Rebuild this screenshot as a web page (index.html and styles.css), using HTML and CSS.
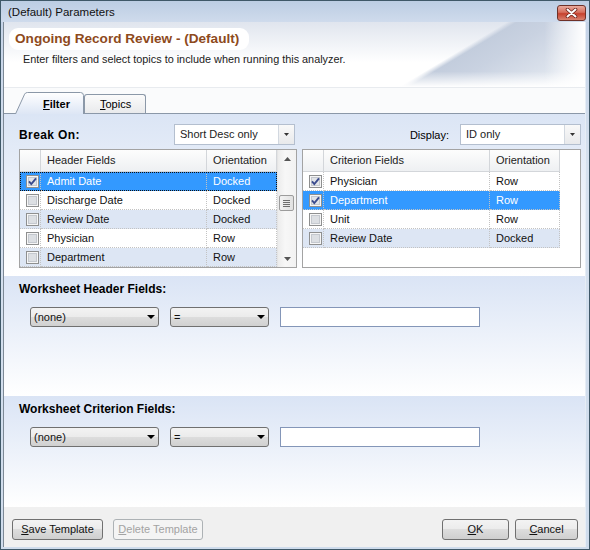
FILE: index.html
```html
<!DOCTYPE html>
<html>
<head>
<meta charset="utf-8">
<title>(Default) Parameters</title>
<link rel="stylesheet" href="styles.css">
</head>
<body>
<div class="window">
  <div class="titlebar">
    <span class="wtitle">(Default) Parameters</span>
    <span class="closebtn">
      <svg width="13" height="10" viewBox="0 0 13 10"><path d="M2.5 1.5 L10.5 8.5 M10.5 1.5 L2.5 8.5" stroke="#6b2219" stroke-width="3.6" stroke-linecap="round"/><path d="M2.5 1.5 L10.5 8.5 M10.5 1.5 L2.5 8.5" stroke="#ffffff" stroke-width="2" stroke-linecap="round"/></svg>
    </span>
  </div>
  <div class="client">
    <div class="banner">
      <div class="pill">Ongoing Record Review - (Default)</div>
      <div class="subtitle">Enter filters and select topics to include when running this analyzer.</div>
    </div>
    <div class="tabstrip">
      <div class="tab tab-on">
        <svg class="tabshape" width="69" height="22" viewBox="0 0 69 22">
          <defs><linearGradient id="tabfill" x1="0" y1="0" x2="0" y2="1"><stop offset="0" stop-color="#ffffff"/><stop offset="1" stop-color="#dde6f5"/></linearGradient></defs>
          <path d="M0.5 22 L9.6 2.2 Q10.4 0.5 12.4 0.5 L65.5 0.5 Q68.5 0.5 68.5 3.5 L68.5 22" fill="url(#tabfill)" stroke="#8b98a8"/>
        </svg>
        <span class="tablabel"><u>F</u>ilter</span>
      </div>
      <div class="tab tab-off"><u>T</u>opics</div>
    </div>
    <div class="page">
      <div class="section section-top">
        <div class="half">
          <div class="fieldrow">
            <span class="blabel">Break On:</span>
            <div class="combo combo-left">
              <span class="combo-text">Short Desc only</span>
              <span class="combo-btn"><svg width="5" height="3" viewBox="0 0 5 3"><path d="M0 0 H5 L2.5 3 Z" fill="#333"/></svg></span>
            </div>
          </div>
          <div class="grid">
            <div class="gtable">
              <div class="grow ghead"><div class="gc"></div><div class="gc">Header Fields</div><div class="gc">Orientation</div></div>
              <div class="grow sel focus">
                <div class="gc cbcell"><svg class="cb" width="13" height="13" viewBox="0 0 13 13"><rect x="0.5" y="0.5" width="12" height="12" fill="#f6f6f6" stroke="#8e8f8f"/><rect x="2.5" y="2.5" width="8" height="8" fill="#e2e4e8" stroke="#c4c8ce"/><path d="M3 6.3 L5.3 9 L10 3.4" fill="none" stroke="#3a4b8e" stroke-width="1.9"/></svg></div>
                <div class="gc">Admit Date</div><div class="gc">Docked</div>
              </div>
              <div class="grow">
                <div class="gc cbcell"><svg class="cb" width="13" height="13" viewBox="0 0 13 13"><rect x="0.5" y="0.5" width="12" height="12" fill="#f6f6f6" stroke="#8e8f8f"/><rect x="2.5" y="2.5" width="8" height="8" fill="#dcdfe3" stroke="#c4c8ce"/></svg></div>
                <div class="gc">Discharge Date</div><div class="gc">Docked</div>
              </div>
              <div class="grow alt">
                <div class="gc cbcell"><svg class="cb" width="13" height="13" viewBox="0 0 13 13"><rect x="0.5" y="0.5" width="12" height="12" fill="#f6f6f6" stroke="#8e8f8f"/><rect x="2.5" y="2.5" width="8" height="8" fill="#dcdfe3" stroke="#c4c8ce"/></svg></div>
                <div class="gc">Review Date</div><div class="gc">Docked</div>
              </div>
              <div class="grow">
                <div class="gc cbcell"><svg class="cb" width="13" height="13" viewBox="0 0 13 13"><rect x="0.5" y="0.5" width="12" height="12" fill="#f6f6f6" stroke="#8e8f8f"/><rect x="2.5" y="2.5" width="8" height="8" fill="#dcdfe3" stroke="#c4c8ce"/></svg></div>
                <div class="gc">Physician</div><div class="gc">Row</div>
              </div>
              <div class="grow alt">
                <div class="gc cbcell"><svg class="cb" width="13" height="13" viewBox="0 0 13 13"><rect x="0.5" y="0.5" width="12" height="12" fill="#f6f6f6" stroke="#8e8f8f"/><rect x="2.5" y="2.5" width="8" height="8" fill="#dcdfe3" stroke="#c4c8ce"/></svg></div>
                <div class="gc">Department</div><div class="gc">Row</div>
              </div>
            </div>
            <div class="vscroll">
              <div class="sarrow"><svg width="7" height="4" viewBox="0 0 7 4"><path d="M0 4 L3.5 0 L7 4 Z" fill="#555"/></svg></div>
              <div class="thumb"><span></span><span></span><span></span><span></span></div>
              <div class="sarrow sdown"><svg width="7" height="4" viewBox="0 0 7 4"><path d="M0 0 L3.5 4 L7 0 Z" fill="#555"/></svg></div>
            </div>
          </div>
        </div>
        <div class="half">
          <div class="fieldrow fieldrow-right">
            <span class="nlabel">Display:</span>
            <div class="combo">
              <span class="combo-text">ID only</span>
              <span class="combo-btn"><svg width="5" height="3" viewBox="0 0 5 3"><path d="M0 0 H5 L2.5 3 Z" fill="#333"/></svg></span>
            </div>
          </div>
          <div class="grid">
            <div class="gtable">
              <div class="grow ghead"><div class="gc"></div><div class="gc">Criterion Fields</div><div class="gc">Orientation</div></div>
              <div class="grow">
                <div class="gc cbcell"><svg class="cb" width="13" height="13" viewBox="0 0 13 13"><rect x="0.5" y="0.5" width="12" height="12" fill="#f6f6f6" stroke="#8e8f8f"/><rect x="2.5" y="2.5" width="8" height="8" fill="#e2e4e8" stroke="#c4c8ce"/><path d="M3 6.3 L5.3 9 L10 3.4" fill="none" stroke="#3a4b8e" stroke-width="1.9"/></svg></div>
                <div class="gc">Physician</div><div class="gc">Row</div>
              </div>
              <div class="grow sel">
                <div class="gc cbcell"><svg class="cb" width="13" height="13" viewBox="0 0 13 13"><rect x="0.5" y="0.5" width="12" height="12" fill="#f6f6f6" stroke="#8e8f8f"/><rect x="2.5" y="2.5" width="8" height="8" fill="#e2e4e8" stroke="#c4c8ce"/><path d="M3 6.3 L5.3 9 L10 3.4" fill="none" stroke="#3a4b8e" stroke-width="1.9"/></svg></div>
                <div class="gc">Department</div><div class="gc">Row</div>
              </div>
              <div class="grow">
                <div class="gc cbcell"><svg class="cb" width="13" height="13" viewBox="0 0 13 13"><rect x="0.5" y="0.5" width="12" height="12" fill="#f6f6f6" stroke="#8e8f8f"/><rect x="2.5" y="2.5" width="8" height="8" fill="#dcdfe3" stroke="#c4c8ce"/></svg></div>
                <div class="gc">Unit</div><div class="gc">Row</div>
              </div>
              <div class="grow alt">
                <div class="gc cbcell"><svg class="cb" width="13" height="13" viewBox="0 0 13 13"><rect x="0.5" y="0.5" width="12" height="12" fill="#f6f6f6" stroke="#8e8f8f"/><rect x="2.5" y="2.5" width="8" height="8" fill="#dcdfe3" stroke="#c4c8ce"/></svg></div>
                <div class="gc">Review Date</div><div class="gc">Docked</div>
              </div>
            </div>
          </div>
        </div>
      </div>
      <div class="section section-fields sec-header">
        <div class="blabel">Worksheet Header Fields:</div>
        <div class="filterrow">
          <div class="dd dd-field"><span>(none)</span><svg width="8" height="4" viewBox="0 0 8 4"><path d="M0 0 H8 L4 4 Z" fill="#000"/></svg></div>
          <div class="dd dd-op"><span>=</span><svg width="8" height="4" viewBox="0 0 8 4"><path d="M0 0 H8 L4 4 Z" fill="#000"/></svg></div>
          <div class="textbox"></div>
        </div>
      </div>
      <div class="section section-fields sec-crit">
        <div class="blabel">Worksheet Criterion Fields:</div>
        <div class="filterrow">
          <div class="dd dd-field"><span>(none)</span><svg width="8" height="4" viewBox="0 0 8 4"><path d="M0 0 H8 L4 4 Z" fill="#000"/></svg></div>
          <div class="dd dd-op"><span>=</span><svg width="8" height="4" viewBox="0 0 8 4"><path d="M0 0 H8 L4 4 Z" fill="#000"/></svg></div>
          <div class="textbox"></div>
        </div>
      </div>
    </div>
    <div class="bottombar">
      <div class="btngroup">
        <div class="btn btn-save"><u>S</u>ave Template</div>
        <div class="btn btn-delete disabled"><u>D</u>elete Template</div>
      </div>
      <div class="btngroup btngroup-right">
        <div class="btn btn-ok"><u>O</u>K</div>
        <div class="btn btn-cancel"><u>C</u>ancel</div>
      </div>
    </div>
  </div>
</div>
</body>
</html>
```
FILE: styles.css
```css
* { box-sizing: border-box; }

body {
  margin: 0;
  font-family: "Liberation Sans", Arial, sans-serif;
  font-size: 11px;
  color: #000;
  background: #fff;
}

.window {
  width: 590px;
  height: 550px;
  border: 1px solid #3f5868;
  background: linear-gradient(#c3d2e7, #d6e1ef 30%, #cfdcec);
  display: flex;
  flex-direction: column;
}

.titlebar {
  height: 21px;
  flex: none;
  display: flex;
  align-items: flex-start;
  justify-content: space-between;
  padding: 0 3px 0 7px;
  background: linear-gradient(#bccde3, #cfdbec);
}

.wtitle {
  font-size: 11.5px;
  color: #111;
  padding-top: 5px;
}

.closebtn {
  margin-top: 4px;
  width: 29px;
  height: 16px;
  border: 1px solid #6e3128;
  border-radius: 3px;
  background: linear-gradient(#e9aa9d, #d66e5c 45%, #c6412d 55%, #d9826f);
  display: flex;
  align-items: center;
  justify-content: center;
}

.client {
  flex: 1;
  margin: 0 3px 2px 2px;
  background: #fff;
  display: flex;
  flex-direction: column;
  border-left: 1px solid #7d8996;
  border-right: 1px solid #e6edf5;
}

.banner {
  height: 66px;
  flex: none;
  padding: 6px 0 0 5px;
  border-bottom: 1px solid #e8ebef;
  background:
    linear-gradient(to right, rgba(255,255,255,0) 93%, #ffffff 100%),
    linear-gradient(to bottom, rgba(255,255,255,0) 76%, #ffffff 100%),
    linear-gradient(149deg, rgba(255,255,255,0) 73%, #c3cddd 74.4%, #c9d2e1 80%, #dfe5ee 92%, #f4f6f9 100%),
    linear-gradient(to bottom, #e0e5ee, #ffffff 62%);
}

.pill {
  display: inline-block;
  height: 22px;
  line-height: 22px;
  padding: 0 10px 0 6px;
  border-radius: 9px;
  background: #fff;
  font-size: 13.6px;
  font-weight: bold;
  color: #8e4a1c;
}

.subtitle {
  margin-top: 3px;
  padding-left: 14px;
  font-size: 10.85px;
  color: #1a1a1a;
}

.tabstrip {
  height: 26px;
  flex: none;
  display: flex;
  align-items: flex-end;
  padding-left: 11px;
  background: #fafbfc;
  border-bottom: 1px solid #8b98a8;
}

.tab {
  height: 19px;
}

.tab-on {
  position: relative;
  width: 69px;
  height: 22px;
  margin-bottom: -1px;
  z-index: 1;
  font-weight: bold;
}

.tabshape {
  position: absolute;
  left: 0;
  top: 0;
}

.tablabel {
  position: relative;
  display: block;
  padding: 6px 0 0 28px;
}

.tab-off {
  width: 62px;
  border: 1px solid #8b98a8;
  border-bottom: none;
  border-radius: 3px 3px 0 0;
  background: linear-gradient(#fbfbfb, #e9eaec);
  padding: 3px 0 0 15px;
}

.page {
  flex: 1;
  display: flex;
  flex-direction: column;
}

.section {
  flex: none;
}

.section-top {
  height: 162px;
  display: flex;
  gap: 5px;
  padding: 10px 4px 0 15px;
  background: linear-gradient(#dbe5f5, #ffffff 100%);
}

.half {
  display: flex;
  flex-direction: column;
  gap: 4px;
}

.half:first-child { width: 279px; }
.half:last-child { width: 280px; }

.fieldrow {
  height: 21px;
  display: flex;
  align-items: center;
  justify-content: space-between;
}

.fieldrow-right {
  justify-content: flex-end;
  gap: 11px;
}

.blabel {
  font-weight: bold;
  font-size: 12px;
  line-height: 14px;
}

.fieldrow .blabel { letter-spacing: 0.4px; }

.combo {
  width: 121px;
  height: 21px;
  border: 1px solid #b4bfcf;
  background: #fff;
  display: flex;
  color: #222;
}

.combo-left { margin-right: 2px; }

.combo-text {
  flex: 1;
  padding-left: 5px;
  line-height: 19px;
}

.combo-btn {
  width: 16px;
  border-left: 1px solid #d2d8e0;
  background: linear-gradient(#f9f9f9, #e8e9eb);
  display: flex;
  align-items: center;
  justify-content: center;
}

.grid {
  height: 119px;
  border: 1px solid #a3a3a3;
  background: #fff;
  display: flex;
}

.gtable {
  width: 257px;
  flex: none;
}

.grow {
  display: grid;
  grid-template-columns: 21px 166px 70px;
  height: 19px;
}

.gc {
  border-right: 1px dotted #c3c3c3;
  border-bottom: 1px dotted #c3c3c3;
  padding-left: 6px;
  line-height: 18px;
  white-space: nowrap;
  overflow: hidden;
  color: #111;
}

.ghead { height: 22px; }

.ghead .gc {
  background: linear-gradient(#fdfdfd, #eef0f2);
  border-right: 1px solid #d3d6da;
  border-bottom: 1px solid #d3d6da;
  line-height: 21px;
  color: #222;
}

.cbcell { padding: 3px 0 0 6px; }

.cb { display: block; }

.alt .gc { background: #dde6f4; }

.sel .gc {
  background: #3399ff;
  color: #fff;
}

.focus {
  outline: 1px dotted #111;
  outline-offset: -1px;
}

.vscroll {
  flex: 1;
  border-left: 1px solid #e4e4e4;
  background: linear-gradient(to right, #ececec, #f7f7f7 40%, #f2f2f2);
  display: flex;
  flex-direction: column;
}

.sarrow {
  height: 17px;
  display: flex;
  align-items: center;
  justify-content: center;
}

.sdown { margin-top: auto; }

.thumb {
  margin: 28px 0 0 1px;
  width: 15px;
  height: 16px;
  border: 1px solid #9c9c9c;
  border-radius: 2px;
  background: linear-gradient(to right, #f3f3f3, #e1e1e1);
  display: flex;
  flex-direction: column;
  align-items: center;
  justify-content: center;
  gap: 1px;
}

.thumb span {
  width: 7px;
  height: 1px;
  background: #6f6f6f;
}

.section-fields {
  padding: 6px 0 0 15px;
  background: linear-gradient(#dae4f5, #ffffff 100%);
}

.sec-header { height: 120px; }
.sec-crit { height: 111px; }

.filterrow {
  margin-top: 11px;
  padding-left: 11px;
  display: flex;
  gap: 11px;
}

.dd {
  height: 20px;
  border: 1px solid #707070;
  border-radius: 3px;
  background: linear-gradient(#f3f3f3 0%, #ebebeb 50%, #dddddd 50%, #d0d0d0 100%);
  display: flex;
  align-items: center;
  justify-content: space-between;
  padding: 0 3px 0 3px;
  color: #111;
}

.dd-field { width: 129px; }
.dd-op { width: 99px; }

.textbox {
  width: 200px;
  height: 20px;
  border: 1px solid #8496b8;
  background: #fff;
}

.bottombar {
  flex: 1;
  background: #f0f0f0;
  display: flex;
  align-items: flex-start;
  padding: 12px 7px 0 8px;
}

.btngroup {
  display: flex;
  gap: 10px;
}

.btngroup-right {
  margin-left: auto;
  gap: 6px;
}

.btn {
  height: 21px;
  border: 1px solid #707070;
  border-radius: 3px;
  background: linear-gradient(#f3f3f3 0%, #ebebeb 50%, #dddddd 50%, #cfcfcf 100%);
  text-align: center;
  line-height: 19px;
  color: #111;
}

.btn-save { width: 91px; }
.btn-delete { width: 90px; }
.btn-ok { width: 67px; }
.btn-cancel { width: 63px; }

.disabled {
  border-color: #adb2b5;
  background: #f4f4f4;
  color: #a3a3a3;
}
```
